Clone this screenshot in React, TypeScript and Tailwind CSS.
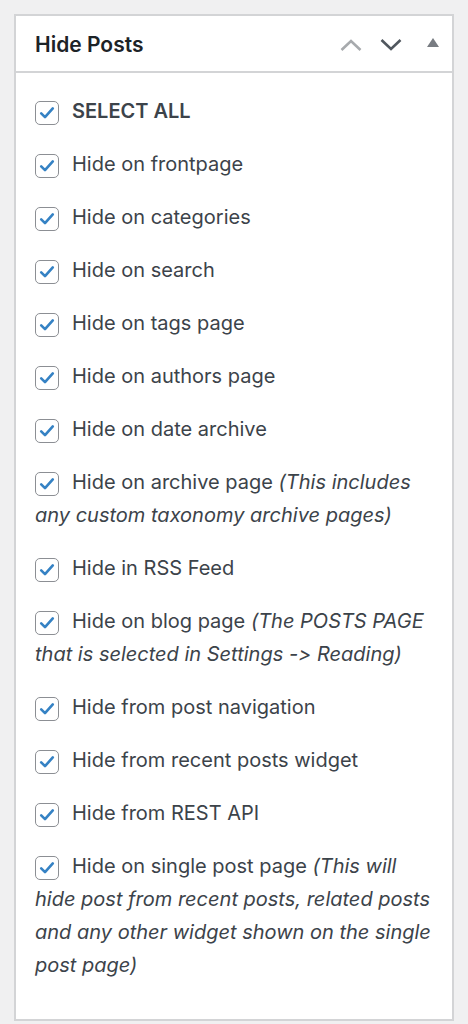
function Check() {
  return (
    <span className="mr-[13px] inline-flex h-[24px] w-[24px] shrink-0 items-center justify-center rounded-[5px] border-[1.5px] border-[#8c8f94] bg-white align-[-5px]">
      <svg viewBox="0 0 20 20" className="h-[20px] w-[20px]">
        <path d="M4.2 10.4 L8 14.2 L15.8 5.4" fill="none" stroke="#3582c4" strokeWidth="2.6" strokeLinecap="round" strokeLinejoin="round" />
      </svg>
    </span>
  )
}

const items: { label: string; note?: string }[] = [
  { label: 'Hide on frontpage' },
  { label: 'Hide on categories' },
  { label: 'Hide on search' },
  { label: 'Hide on tags page' },
  { label: 'Hide on authors page' },
  { label: 'Hide on date archive' },
  { label: 'Hide on archive page', note: '(This includes any custom taxonomy archive pages)' },
  { label: 'Hide in RSS Feed' },
  { label: 'Hide on blog page', note: '(The POSTS PAGE that is selected in Settings -> Reading)' },
  { label: 'Hide from post navigation' },
  { label: 'Hide from recent posts widget' },
  { label: 'Hide from REST API' },
  {
    label: 'Hide on single post page',
    note: '(This will hide post from recent posts, related posts and any other widget shown on the single post page)',
  },
]

export default function App() {
  return (
    <div className="min-h-[1024px] bg-[#f0f0f1] pt-[14px] pl-[14px] font-['Inter',sans-serif] text-[#3c434a] [font-feature-settings:'calt'_0,'liga'_0]">
      <div className="h-[1007px] w-[440px] border-2 border-[#d3d4d6] bg-white">
        <div className="flex h-[57px] items-center justify-between border-b-2 border-[#d3d4d6] pl-[19px] pr-[13px] pt-[2px]">
          <h2 className="text-[21px] font-semibold text-[#1d2327]">Hide Posts</h2>
          <div className="flex items-center">
            <svg viewBox="0 0 22 12" className="h-[12px] w-[22px]">
              <path d="M1.5 11 L11 2 L20.5 11" fill="none" stroke="#a7aaad" strokeWidth="2.6" />
            </svg>
            <svg viewBox="0 0 22 12" className="ml-[18px] h-[12px] w-[22px]">
              <path d="M1.5 1 L11 10 L20.5 1" fill="none" stroke="#50575e" strokeWidth="2.6" />
            </svg>
            <svg viewBox="0 0 12 9" className="ml-[25px] mb-[4px] h-[9px] w-[12px]">
              <path d="M0 9 L6 0 L12 9 Z" fill="#787c82" />
            </svg>
          </div>
        </div>
        <div className="pl-[19px] pr-[16px] pt-[22px] text-[20px] leading-[33px]">
          <p className="mb-[20px] font-semibold">
            <Check />
            SELECT ALL
          </p>
          {items.map((it) => (
            <p key={it.label} className="mb-[20px]">
              <Check />
              {it.label}
              {it.note && <em> {it.note}</em>}
            </p>
          ))}
        </div>
      </div>
    </div>
  )
}
